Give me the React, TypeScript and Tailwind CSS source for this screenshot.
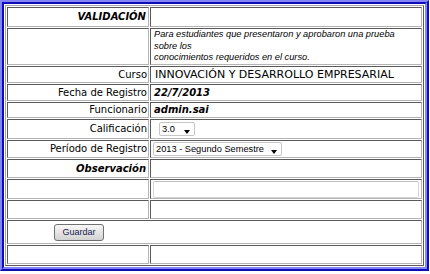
const cell =
  'border border-t-[#5a5a5a] border-l-[#5a5a5a] border-r-[#b4b4b4] border-b-[#b4b4b4] p-0 text-[10px] leading-[12px]'
const label = `${cell} w-[142px] text-right pr-[1px] text-black font-['DejaVu_Sans',sans-serif]`
const value = `${cell} w-[272px] pl-[2px] text-black font-['DejaVu_Sans',sans-serif]`
const strong = "font-bold italic text-[10px] font-['DejaVu_Sans',sans-serif]"

function FakeSelect({ text, width }: { text: string; width: string }) {
  return (
    <div
      className={`flex h-[14px] items-center rounded-[2px] border border-[#c6c6c6] bg-white ${width}`}
    >
      <span className="pl-[2px] text-[9.25px] leading-[12px] text-black font-['Liberation_Sans',Arial,sans-serif]">
        {text}
      </span>
      <span className="mr-[4px] mb-[1px] ml-auto self-end h-0 w-0 border-x-[3.5px] border-t-[4px] border-x-transparent border-t-black" />
    </div>
  )
}

export default function App() {
  return (
    <div className="w-[430px] h-[274px] bg-white">
      {/* Blue ridge frame */}
      <div className="w-[429px] border-2 border-t-[#8484f4] border-l-[#8484f4] border-r-[#0c0cb8] border-b-[#0c0cb8]">
        <div className="border-2 border-t-[#0c0cb8] border-l-[#0c0cb8] border-r-[#8484f4] border-b-[#8484f4] bg-white p-[1px]">
          <table className="border-separate border-spacing-[1px] border border-t-[#a8a8a8] border-l-[#a8a8a8] border-r-[#5a5a5a] border-b-[#5a5a5a] w-[419px]">
            <tbody>
              <tr className="h-[20px]">
                <td className={label}>
                  <span className={`${strong} pr-[1px]`}>VALIDACIÓN</span>
                </td>
                <td className={value} />
              </tr>

              <tr className="h-[37px]">
                <td className={label} />
                <td className={value}>
                  <p className="pl-[1px] text-[9.25px] italic leading-[11.5px] font-['Liberation_Sans',Arial,sans-serif]">
                    Para estudiantes que presentaron y aprobaron una prueba
                    <br />
                    sobre los
                    <br />
                    conocimientos requeridos en el curso.
                  </p>
                </td>
              </tr>

              <tr className="h-[17px]">
                <td className={label}>Curso</td>
                <td className={`${value} text-[11px]`}>
                  <span className="pl-[2px]">INNOVACIÓN Y DESARROLLO EMPRESARIAL</span>
                </td>
              </tr>

              <tr className="h-[17px]">
                <td className={label}>Fecha de Registro</td>
                <td className={value}>
                  <span className={`${strong} pl-[1px]`}>22/7/2013</span>
                </td>
              </tr>

              <tr className="h-[16px]">
                <td className={label}>Funcionario</td>
                <td className={value}>
                  <span className={`${strong} pl-[1px]`}>admin.sai</span>
                </td>
              </tr>

              <tr className="h-[20px]">
                <td className={label}>Calificación</td>
                <td className={value}>
                  <div className="pl-[6px]">
                    <FakeSelect text="3.0" width="w-[36px]" />
                  </div>
                </td>
              </tr>

              <tr className="h-[18px]">
                <td className={label}>Período de Registro</td>
                <td className={value}>
                  <FakeSelect text="2013 - Segundo Semestre" width="w-[129px]" />
                </td>
              </tr>

              <tr className="h-[19px]">
                <td className={label}>
                  <span className={`${strong} pr-[1px]`}>Observación</span>
                </td>
                <td className={value} />
              </tr>

              <tr className="h-[20px]">
                <td className={label} />
                <td className={value}>
                  <div className="h-[17px] w-[266px] rounded-[2px] border border-[#d4d4d4] border-t-[#bdbdbd] bg-white" />
                </td>
              </tr>

              <tr className="h-[19px]">
                <td className={label} />
                <td className={value} />
              </tr>

              <tr className="h-[24px]">
                <td colSpan={2} className={`${cell} pl-[46px]`}>
                  <button className="flex h-[17px] w-[50px] items-center justify-center rounded-[3px] border border-[#707070] bg-linear-to-b from-[#f8f8f8] to-[#d2d2d2] text-[9px] text-[#16204a] font-['Liberation_Sans',Arial,sans-serif]">
                    Guardar
                  </button>
                </td>
              </tr>

              <tr className="h-[19px]">
                <td className={label} />
                <td className={value} />
              </tr>
            </tbody>
          </table>
        </div>
      </div>
    </div>
  )
}
